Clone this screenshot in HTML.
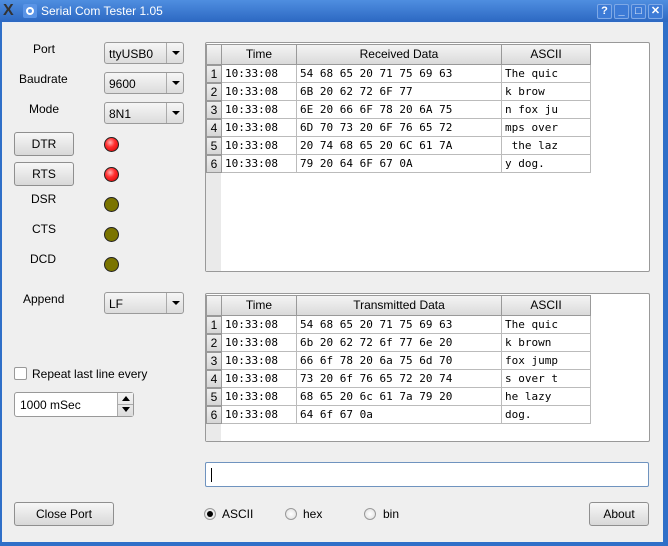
<!DOCTYPE html>
<html><head><meta charset="utf-8"><style>
*{box-sizing:border-box;margin:0;padding:0}
body{width:668px;height:546px;overflow:hidden;background:#2f6fc8;font-family:"Liberation Sans",sans-serif;font-size:12px;color:#000;position:relative}
.a{position:absolute}
#title{left:0;top:0;width:668px;height:22px;background:linear-gradient(#4f8ee0,#2c68c2);}
#title .t{left:41px;top:4px;color:#fff;font-size:12px}
.tb{top:4px;width:15px;height:15px;border:1px solid #7fa9e6;border-radius:2px;background:#3d7bd6;color:#fff;font-size:11px;font-weight:bold;text-align:center;line-height:13px}
#content{left:2px;top:22px;width:661px;height:520px;background:#efefef;border-top:1px solid #e8eef8}
.lbl{font-size:12px}
.combo{width:80px;height:22px;border:1px solid #9a9a9a;border-radius:3px;background:linear-gradient(#f6f6f6,#dcdcdc)}
.combo span{position:absolute;left:4px;top:4px}
.combo i{position:absolute;right:0;top:0;width:17px;height:20px;border-left:1px solid #aaa}
.combo i:after{content:"";position:absolute;left:5px;top:8px;border-left:4px solid transparent;border-right:4px solid transparent;border-top:4px solid #000}
.btn{height:24px;border:1px solid #8f8f8f;border-radius:3px;background:linear-gradient(#f7f7f7,#d8d8d8);text-align:center;line-height:22px}
.led{width:15px;height:15px;border-radius:50%;border:1px solid #222}
.red{background:radial-gradient(circle at 40% 35%,#ffb0b0 0,#ff3030 40%,#d00000 100%)}
.ol{background:#7a7400}
.tbl{left:205px;width:445px;border:1px solid #999;border-radius:2px;background:#fff}
.hd{height:21px;background:linear-gradient(#f4f4f4,#dadada);border:1px solid #999;text-align:center;line-height:19px}
.cell{height:18px;border-right:1px solid #bbb;border-bottom:1px solid #bbb;font-family:"DejaVu Sans Mono","Liberation Mono",monospace;font-size:11px;line-height:17px;padding-left:3px;white-space:pre}
.rn{width:16px;height:18px;background:linear-gradient(#efefef,#d6d6d6);border:1px solid #999;text-align:center;line-height:16px;font-size:12px}
.radio{width:12px;height:12px;border-radius:50%;border:1px solid #999;background:radial-gradient(#fff,#ddd)}
</style></head><body>
<div id="title" class="a">
<div class="a" style="left:3px;top:3px;width:16px;height:16px;color:#333;font-weight:bold;font-size:16px;line-height:16px">X</div>
<div class="a" style="left:23px;top:4px;width:14px;height:14px;background:#5a94e6;border-radius:2px"><div class="a" style="left:3px;top:3px;width:8px;height:8px;border:2px solid #fff;border-radius:50%"></div></div>
<div class="a t">Serial Com Tester 1.05</div>
<div class="a tb" style="left:597px">?</div>
<div class="a tb" style="left:614px">_</div>
<div class="a tb" style="left:631px">□</div>
<div class="a tb" style="left:648px">✕</div>
</div>
<div id="content" class="a"></div>

<div class="a lbl" style="left:33px;top:42px">Port</div>
<div class="a lbl" style="left:19px;top:72px">Baudrate</div>
<div class="a lbl" style="left:29px;top:102px">Mode</div>
<div class="a combo" style="left:104px;top:42px"><span>ttyUSB0</span><i></i></div>
<div class="a combo" style="left:104px;top:72px"><span>9600</span><i></i></div>
<div class="a combo" style="left:104px;top:102px"><span>8N1</span><i></i></div>
<div class="a btn" style="left:14px;top:132px;width:60px">DTR</div>
<div class="a btn" style="left:14px;top:162px;width:60px">RTS</div>
<div class="a led red" style="left:104px;top:137px"></div>
<div class="a led red" style="left:104px;top:167px"></div>
<div class="a lbl" style="left:31px;top:192px">DSR</div>
<div class="a lbl" style="left:32px;top:222px">CTS</div>
<div class="a lbl" style="left:30px;top:252px">DCD</div>
<div class="a led ol" style="left:104px;top:197px"></div>
<div class="a led ol" style="left:104px;top:227px"></div>
<div class="a led ol" style="left:104px;top:257px"></div>
<div class="a lbl" style="left:23px;top:292px">Append</div>
<div class="a combo" style="left:104px;top:292px"><span>LF</span><i></i></div>

<div class="a" style="left:14px;top:367px;width:13px;height:13px;border:1px solid #999;border-radius:2px;background:#fff"></div>
<div class="a lbl" style="left:32px;top:367px">Repeat last line every</div>
<div class="a" style="left:14px;top:392px;width:120px;height:25px;border:1px solid #999;border-radius:3px;background:#fff"><span class="a" style="left:5px;top:5px">1000 mSec</span>
<div class="a" style="left:102px;top:0;width:16px;height:23px;border-left:1px solid #aaa;background:linear-gradient(#f4f4f4,#dcdcdc)"><div class="a" style="left:4px;top:3px;border-left:4px solid transparent;border-right:4px solid transparent;border-bottom:5px solid #000"></div><div class="a" style="left:0;top:11px;width:15px;border-top:1px solid #aaa"></div><div class="a" style="left:4px;top:14px;border-left:4px solid transparent;border-right:4px solid transparent;border-top:5px solid #000"></div></div></div>
<div class="a btn" style="left:14px;top:502px;width:100px">Close Port</div>

<!-- table 1 -->
<div class="a tbl" style="top:42px;height:230px">
<div class="a hd" style="left:0;top:1px;width:16px"></div>
<div class="a hd" style="left:15px;top:1px;width:76px">Time</div>
<div class="a hd" style="left:90px;top:1px;width:206px">Received Data</div>
<div class="a hd" style="left:295px;top:1px;width:90px">ASCII</div>
<div class="a" style="left:0;top:130px;width:15px;height:98px;background:#eaeaea"></div>
<div class="a" style="left:0;top:22px;width:385px">
<div style="display:flex"><div class="rn">1</div><div class="cell" style="width:75px">10:33:08</div><div class="cell" style="width:205px">54 68 65 20 71 75 69 63</div><div class="cell" style="width:89px">The quic</div></div>
<div style="display:flex"><div class="rn">2</div><div class="cell" style="width:75px">10:33:08</div><div class="cell" style="width:205px">6B 20 62 72 6F 77</div><div class="cell" style="width:89px">k brow</div></div>
<div style="display:flex"><div class="rn">3</div><div class="cell" style="width:75px">10:33:08</div><div class="cell" style="width:205px">6E 20 66 6F 78 20 6A 75</div><div class="cell" style="width:89px">n fox ju</div></div>
<div style="display:flex"><div class="rn">4</div><div class="cell" style="width:75px">10:33:08</div><div class="cell" style="width:205px">6D 70 73 20 6F 76 65 72</div><div class="cell" style="width:89px">mps over</div></div>
<div style="display:flex"><div class="rn">5</div><div class="cell" style="width:75px">10:33:08</div><div class="cell" style="width:205px">20 74 68 65 20 6C 61 7A</div><div class="cell" style="width:89px"> the laz</div></div>
<div style="display:flex"><div class="rn">6</div><div class="cell" style="width:75px">10:33:08</div><div class="cell" style="width:205px">79 20 64 6F 67 0A</div><div class="cell" style="width:89px">y dog.</div></div>
</div></div>

<!-- table 2 -->
<div class="a tbl" style="top:293px;height:149px">
<div class="a hd" style="left:0;top:1px;width:16px"></div>
<div class="a hd" style="left:15px;top:1px;width:76px">Time</div>
<div class="a hd" style="left:90px;top:1px;width:206px">Transmitted Data</div>
<div class="a hd" style="left:295px;top:1px;width:90px">ASCII</div>
<div class="a" style="left:0;top:130px;width:15px;height:17px;background:#eaeaea"></div>
<div class="a" style="left:0;top:22px;width:385px">
<div style="display:flex"><div class="rn">1</div><div class="cell" style="width:75px">10:33:08</div><div class="cell" style="width:205px">54 68 65 20 71 75 69 63</div><div class="cell" style="width:89px">The quic</div></div>
<div style="display:flex"><div class="rn">2</div><div class="cell" style="width:75px">10:33:08</div><div class="cell" style="width:205px">6b 20 62 72 6f 77 6e 20</div><div class="cell" style="width:89px">k brown</div></div>
<div style="display:flex"><div class="rn">3</div><div class="cell" style="width:75px">10:33:08</div><div class="cell" style="width:205px">66 6f 78 20 6a 75 6d 70</div><div class="cell" style="width:89px">fox jump</div></div>
<div style="display:flex"><div class="rn">4</div><div class="cell" style="width:75px">10:33:08</div><div class="cell" style="width:205px">73 20 6f 76 65 72 20 74</div><div class="cell" style="width:89px">s over t</div></div>
<div style="display:flex"><div class="rn">5</div><div class="cell" style="width:75px">10:33:08</div><div class="cell" style="width:205px">68 65 20 6c 61 7a 79 20</div><div class="cell" style="width:89px">he lazy</div></div>
<div style="display:flex"><div class="rn">6</div><div class="cell" style="width:75px">10:33:08</div><div class="cell" style="width:205px">64 6f 67 0a</div><div class="cell" style="width:89px">dog.</div></div>
</div></div>

<div class="a" style="left:205px;top:462px;width:444px;height:25px;border:1px solid #6f93bf;border-radius:2px;background:#fff"><div class="a" style="left:5px;top:5px;width:1px;height:14px;background:#000"></div></div>

<div class="a radio" style="left:204px;top:508px"><div class="a" style="left:2px;top:2px;width:6px;height:6px;border-radius:50%;background:#000"></div></div>
<div class="a lbl" style="left:222px;top:507px">ASCII</div>
<div class="a radio" style="left:285px;top:508px"></div>
<div class="a lbl" style="left:303px;top:507px">hex</div>
<div class="a radio" style="left:364px;top:508px"></div>
<div class="a lbl" style="left:383px;top:507px">bin</div>
<div class="a btn" style="left:589px;top:502px;width:60px">About</div>
</body></html>
